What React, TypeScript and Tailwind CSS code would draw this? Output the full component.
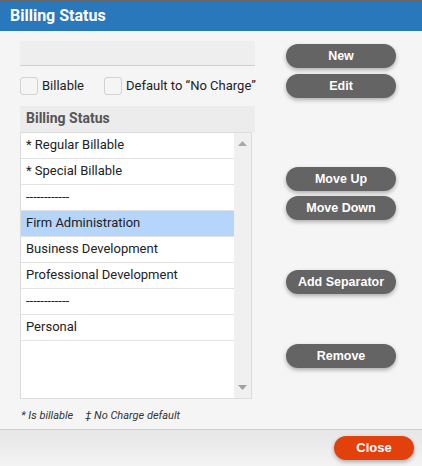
import React from "react";

const rows = [
  "* Regular Billable",
  "* Special Billable",
  "------------",
  "Firm Administration",
  "Business Development",
  "Professional Development",
  "------------",
  "Personal",
];

function Btn({ label, className = "" }: { label: string; className?: string }) {
  return (
    <button
      className={
        "flex h-[24px] w-[110px] items-center justify-center rounded-full bg-[#646464] text-[12.5px] font-bold text-white shadow-[0_2px_4px_rgba(0,0,0,0.3)] " +
        className
      }
      style={{ fontFamily: '"Liberation Sans", Arial, sans-serif' }}
    >
      {label}
    </button>
  );
}

function Checkbox({ label }: { label: string }) {
  return (
    <label className="flex shrink-0 items-center gap-[4px] whitespace-nowrap">
      <span className="h-[18px] w-[18px] shrink-0 rounded-[3px] border border-[#d2d2d2] bg-[#f5f5f5]" />
      <span className="text-[13px] text-[#222]">{label}</span>
    </label>
  );
}

export default function App() {
  return (
    <div
      className="flex h-[466px] w-[422px] flex-col bg-[#f5f5f5]"
      style={{ fontFamily: 'Roboto, "Liberation Sans", sans-serif' }}
    >
      <div className="flex h-[31px] shrink-0 items-center border-t border-[#666] bg-[#2878bb] px-[10px]">
        <h1 className="text-[16px] font-bold text-white">Billing Status</h1>
      </div>

      <div className="flex flex-1 px-[20px]">
        <div className="flex w-[235px] shrink-0 flex-col pt-[10px]">
          <div className="h-[25px] border-b border-[#cfcfcf] bg-[#eeeeee]" />
          <div className="mt-[10px] flex items-center gap-[20px]">
            <Checkbox label="Billable" />
            <Checkbox label="Default to “No Charge”" />
          </div>
          <div className="mt-[10px] flex h-[26px] items-center bg-[#ececec] px-[6px] text-[14px] font-bold text-[#555]">
            Billing Status
          </div>
          <div className="flex h-[267px] w-[232px] border border-[#dcdcdc] bg-white">
            <div className="flex-1">
              {rows.map((r, i) => (
                <div
                  key={i}
                  className={
                    "flex h-[26px] items-center border-b border-[#e2e2e2] px-[5px] text-[13px] text-[#222] " +
                    (i === 3 ? "bg-[#b5d5fb]" : "")
                  }
                >
                  {r}
                </div>
              ))}
            </div>
            <div className="flex w-[17px] flex-col items-center justify-between bg-[#f0f0f0] py-[8px]">
              <svg width="9" height="5" viewBox="0 0 9 5">
                <path d="M0 5 L4.5 0 L9 5 Z" fill="#a8a8a8" />
              </svg>
              <svg width="9" height="5" viewBox="0 0 9 5">
                <path d="M0 0 L4.5 5 L9 0 Z" fill="#a0a0a0" />
              </svg>
            </div>
          </div>
          <div className="mt-[9px] flex gap-[12px] pl-[1px] text-[11px] italic text-[#333]">
            <span>* Is billable</span>
            <span>‡ No Charge default</span>
          </div>
        </div>

        <div className="ml-[31px] flex shrink-0 flex-col pt-[13px]">
          <Btn label="New" />
          <Btn label="Edit" className="mt-[6px]" />
          <Btn label="Move Up" className="mt-[69px]" />
          <Btn label="Move Down" className="mt-[5px]" />
          <Btn label="Add Separator" className="mt-[50px]" />
          <Btn label="Remove" className="mt-[50px]" />
        </div>
      </div>

      <div className="flex h-[37px] shrink-0 items-center justify-end border-t border-[#cfcfcf] bg-gradient-to-b from-[#e6e6e6] to-[#f3f3f3] pr-[8px]">
        <button
          className="h-[24px] w-[80px] rounded-full bg-[#e2410c] text-[13px] font-bold text-white shadow-[0_2px_4px_rgba(0,0,0,0.3)]"
          style={{ fontFamily: '"Liberation Sans", Arial, sans-serif' }}
        >
          Close
        </button>
      </div>
    </div>
  );
}
